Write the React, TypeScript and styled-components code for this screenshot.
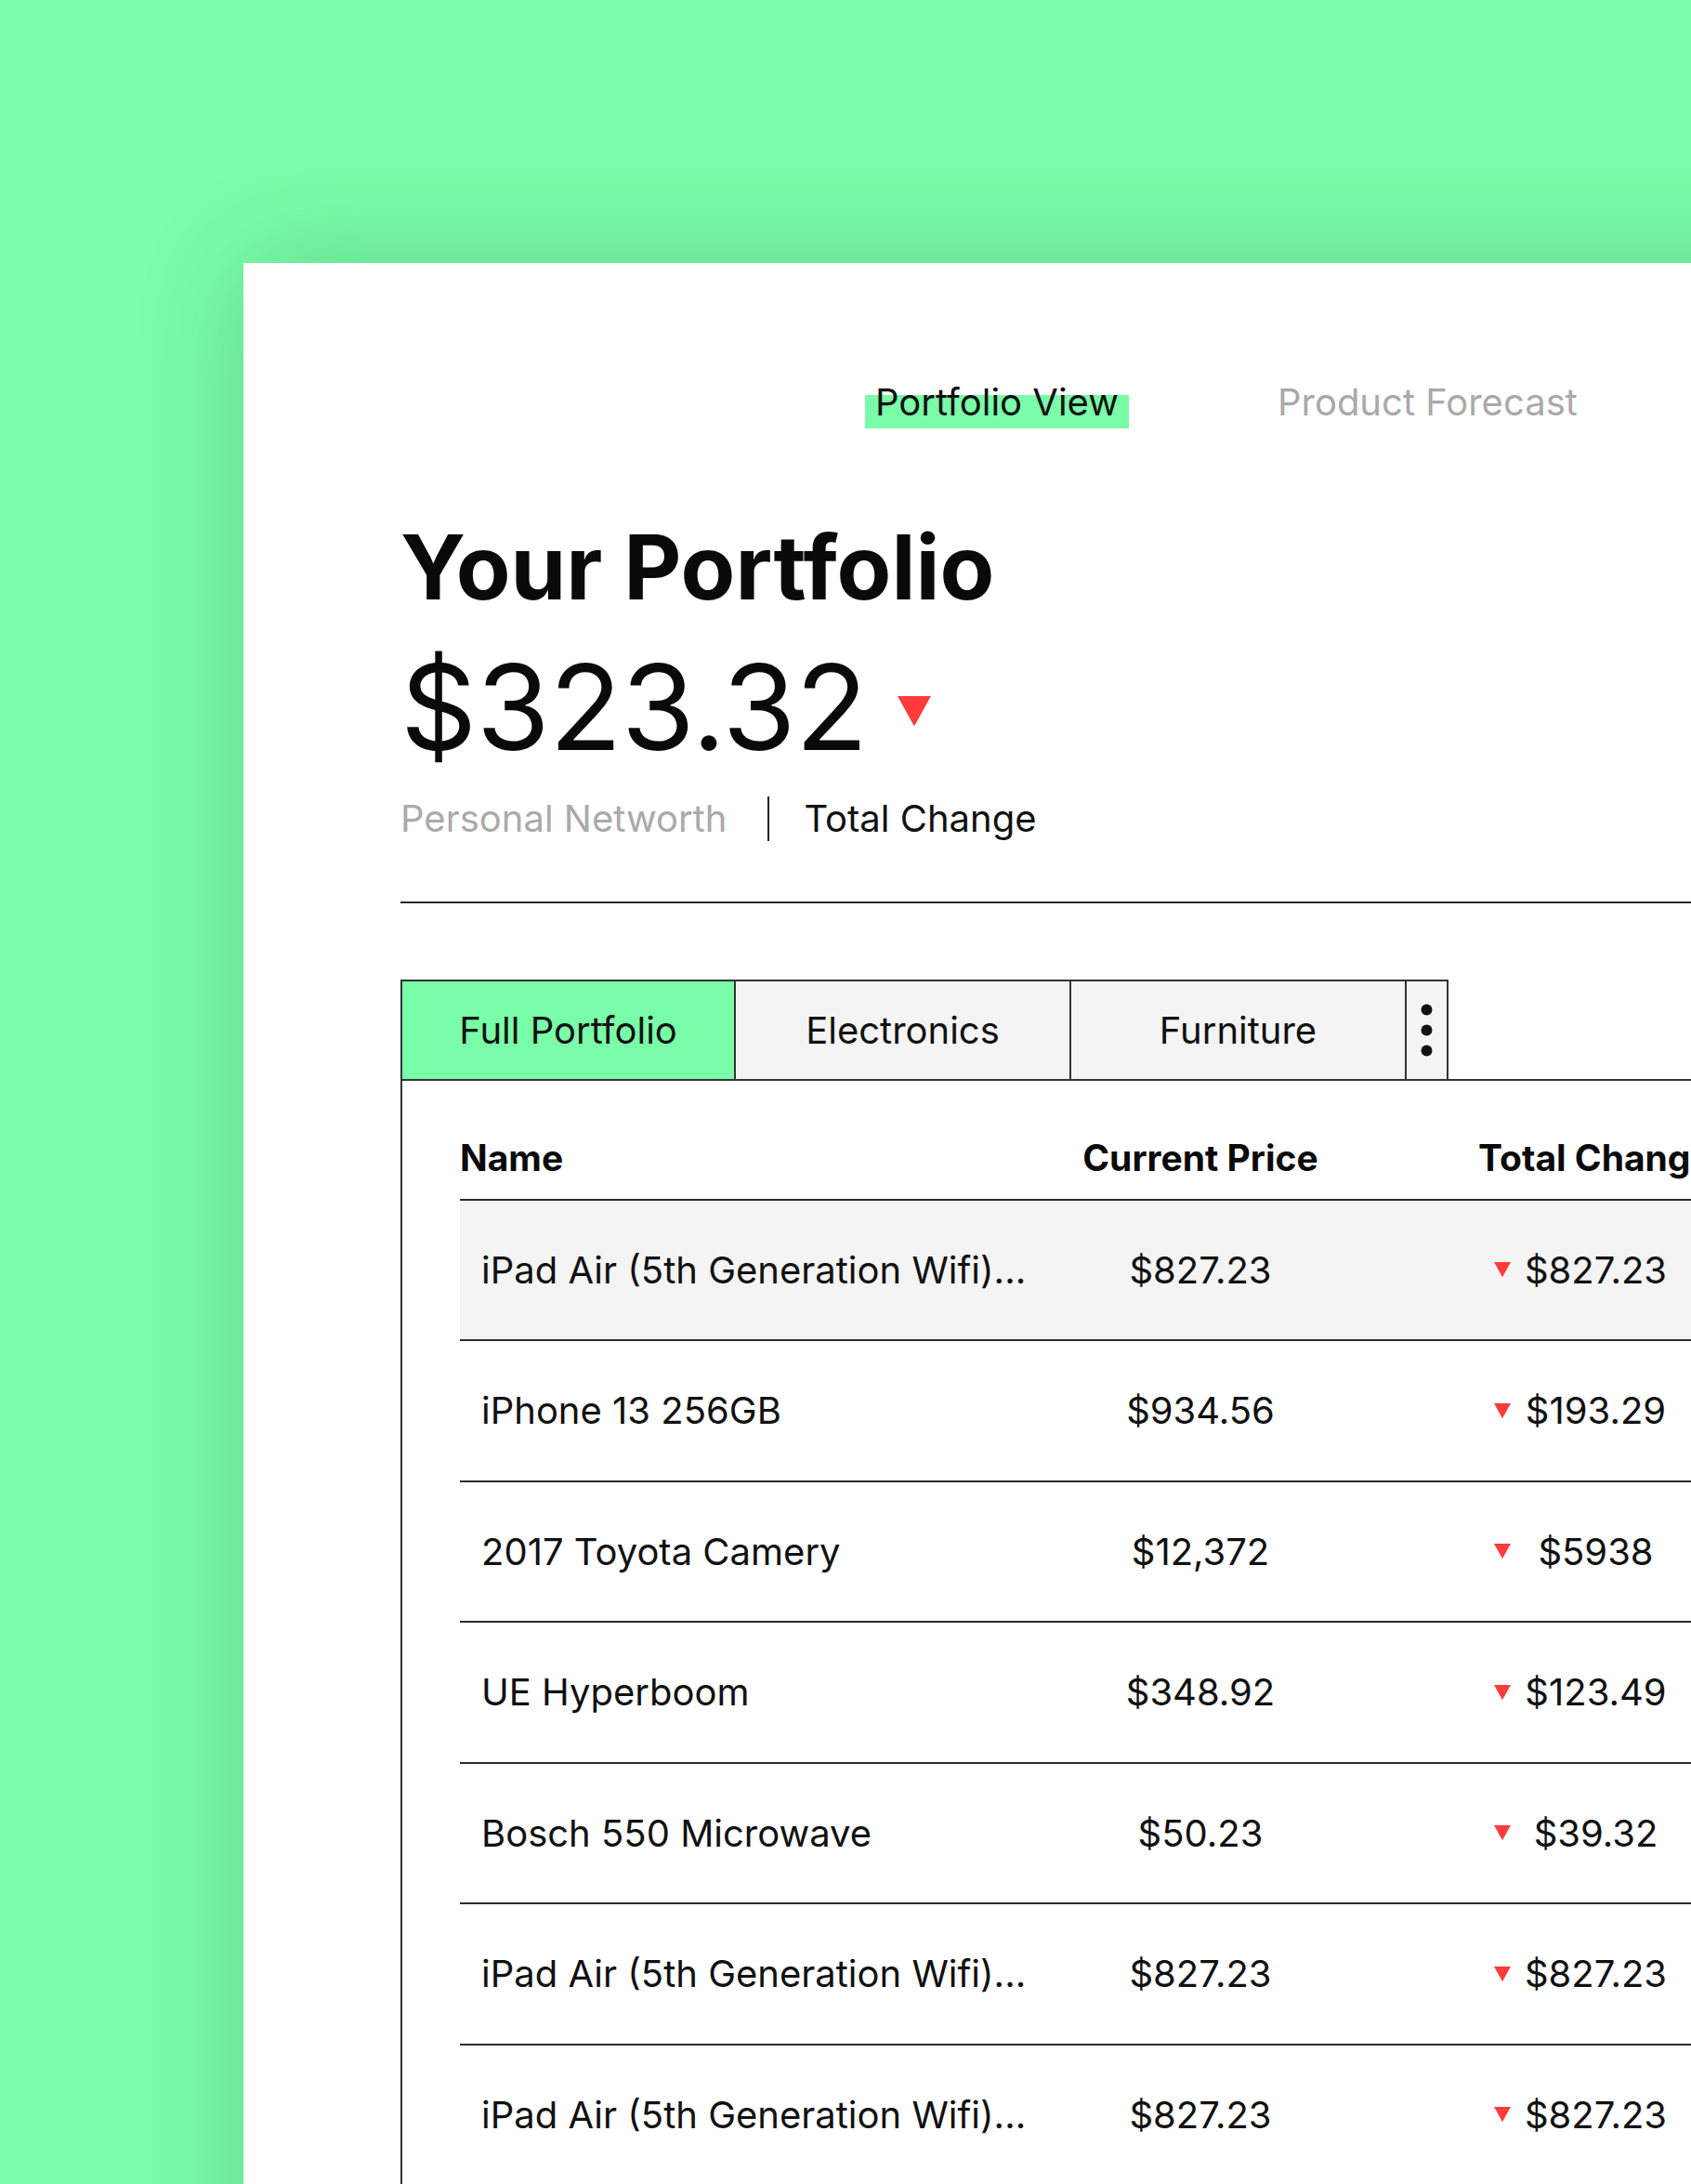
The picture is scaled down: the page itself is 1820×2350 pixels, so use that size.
import styled, { createGlobalStyle } from 'styled-components';

const GlobalStyle = createGlobalStyle`
  html, body {
    margin: 0;
    padding: 0;
    background: #79fda9;
    overflow: hidden;
  }
  body {
    font-family: Inter, "Noto Sans", sans-serif;
    color: #111;
  }
`

const rows = [
    { name: 'iPad Air (5th Generation Wifi)...', price: '$827.23', change: '$827.23' },
    { name: 'iPhone 13 256GB', price: '$934.56', change: '$193.29' },
    { name: '2017 Toyota Camery', price: '$12,372', change: '$5938' },
    { name: 'UE Hyperboom', price: '$348.92', change: '$123.49' },
    { name: 'Bosch 550 Microwave', price: '$50.23', change: '$39.32' },
    { name: 'iPad Air (5th Generation Wifi)...', price: '$827.23', change: '$827.23' },
    { name: 'iPad Air (5th Generation Wifi)...', price: '$827.23', change: '$827.23' },
]

function DownArrow({ size }: { size: number }) {
    return (
        <svg width={size} height={size * 0.9} viewBox="0 0 20 18">
            <polygon points="0,0 20,0 10,18" fill="#ff3b3b" />
        </svg>
    )
}

export default function App() {
    return (
        <Page>
            <GlobalStyle />
            <Card>
                <Nav>
                    <NavLink $active>Portfolio View</NavLink>
                    <NavLink>Product Forecast</NavLink>
                </Nav>
                <Title>Your Portfolio</Title>
                <Amount>
                    $323.32
                    <AmountArrow><DownArrow size={36} /></AmountArrow>
                </Amount>
                <Labels>
                    <Label $muted>Personal Networth</Label>
                    <Divider />
                    <Label>Total Change</Label>
                </Labels>
                <Rule />
                <Tabs>
                    <Tab $active>Full Portfolio</Tab>
                    <Tab>Electronics</Tab>
                    <Tab>Furniture</Tab>
                    <MoreTab>
                        <svg width="13" height="57" viewBox="0 0 13 57">
                            <circle cx="6.5" cy="6.5" r="6" fill="#111" />
                            <circle cx="6.5" cy="28.5" r="6" fill="#111" />
                            <circle cx="6.5" cy="50.5" r="6" fill="#111" />
                        </svg>
                    </MoreTab>
                    <TabFill />
                </Tabs>
                <TableBox>
                    <HeadRow>
                        <HeadCell>Name</HeadCell>
                        <HeadCell $center>Current Price</HeadCell>
                        <HeadCell>Total Change</HeadCell>
                    </HeadRow>
                    {rows.map((r, i) => (
                        <Row key={i} $shaded={i === 0}>
                            <NameCell>{r.name}</NameCell>
                            <PriceCell>{r.price}</PriceCell>
                            <ChangeCell>
                                <DownArrow size={18} />
                                <ChangeValue>{r.change}</ChangeValue>
                            </ChangeCell>
                        </Row>
                    ))}
                </TableBox>
            </Card>
        </Page>
    )
}

const Page = styled.div`
width: 1820px;
height: 2350px;
padding: 283px 0 0 262px;
box-sizing: border-box;
overflow: hidden;
`

const Card = styled.div`
width: 1760px;
min-height: 2200px;
background: #fff;
box-shadow: 0 0 110px rgba(0, 60, 25, 0.2);
padding: 127.5px 0 0 169px;
box-sizing: border-box;
`

const Nav = styled.div`
display: flex;
gap: 149px;
padding-left: 500px;
`

const NavLink = styled.span<{ $active?: boolean }>`
display: inline-block;
font-size: 40px;
line-height: 44px;
padding: 0 11px 6px;
color: ${p => p.$active ? '#111' : '#a9a9a9'};
background: ${p => p.$active ? 'linear-gradient(to bottom, transparent 0 14px, #79fda9 14px 100%)' : 'none'};
`

const Title = styled.h1`
margin: 91.5px 0 0;
font-size: 96px;
line-height: 116px;
font-weight: 700;
letter-spacing: 0;
color: #0a0a0a;
`

const Amount = styled.div`
margin-top: 29px;
display: flex;
align-items: center;
font-size: 128px;
line-height: 128px;
font-weight: 400;
letter-spacing: -0.5px;
color: #0a0a0a;
`

const AmountArrow = styled.span`
display: flex;
margin-left: 32px;
margin-top: 9px;
`

const Labels = styled.div`
margin-top: 34px;
display: flex;
align-items: center;
height: 44px;
`

const Label = styled.span<{ $muted?: boolean }>`
font-size: 40px;
line-height: 44px;
color: ${p => p.$muted ? '#aaaaaa' : '#111'};
`

const Divider = styled.span`
width: 2px;
height: 48px;
margin: 0 37px 0 44px;
background: #222;
`

const Rule = styled.div`
margin-top: 67px;
height: 2px;
background: #2b2b2b;
`

const Tabs = styled.div`
margin-top: 82px;
display: flex;
height: 109px;
`

const Tab = styled.div<{ $active?: boolean }>`
width: 361px;
display: flex;
align-items: center;
justify-content: center;
font-size: 40px;
color: #111;
background: ${p => p.$active ? '#79fda9' : '#f4f4f4'};
border: 2px solid #333;
border-left-width: ${p => p.$active ? '2px' : '0'};
box-sizing: border-box;
`

const MoreTab = styled.div`
width: 45px;
display: flex;
align-items: center;
justify-content: center;
background: #f4f4f4;
border: 2px solid #333;
border-left-width: 0;
box-sizing: border-box;
`

const TabFill = styled.div`
flex: 1;
border-bottom: 2px solid #333;
`

const TableBox = styled.div`
border-left: 2px solid #333;
padding-left: 62px;
`

const cols = '645px 304px 146px 300px 1fr'

const HeadRow = styled.div`
display: grid;
grid-template-columns: ${cols};
padding: 60.5px 0 22px;
border-bottom: 2px solid #2b2b2b;
`

const HeadCell = styled.div<{ $center?: boolean }>`
font-size: 39px;
line-height: 44px;
font-weight: 700;
color: #0a0a0a;
text-align: ${p => p.$center ? 'center' : 'left'};
white-space: nowrap;
&:nth-child(3) {
  grid-column: 4;
  padding-left: 1px;
}
`

const Row = styled.div<{ $shaded?: boolean }>`
display: grid;
grid-template-columns: ${cols};
align-items: center;
height: 151.5px;
box-sizing: border-box;
border-bottom: 2px solid #2b2b2b;
background: ${p => p.$shaded ? '#f4f4f4' : '#fff'};
`

const NameCell = styled.div`
padding-left: 23px;
font-size: 40px;
color: #111;
white-space: nowrap;
`

const PriceCell = styled.div`
font-size: 40px;
color: #111;
text-align: center;
`

const ChangeCell = styled.div`
grid-column: 4;
display: flex;
align-items: center;
padding-left: 18px;
gap: 14px;
font-size: 40px;
color: #111;
`

const ChangeValue = styled.span`
width: 155px;
text-align: center;
`
